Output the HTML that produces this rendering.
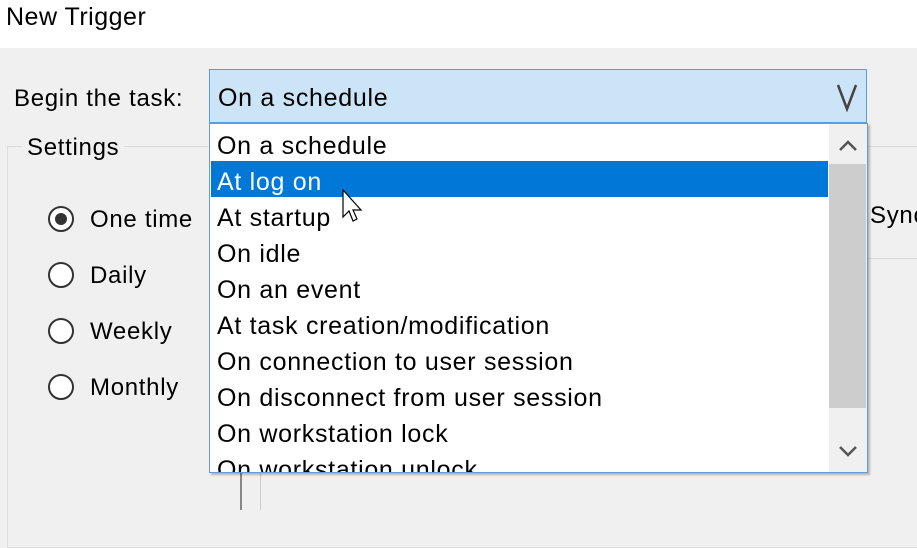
<!DOCTYPE html>
<html><head><style>
body{margin:0;width:917px;height:509px;overflow:hidden;background:#f0f0f0;font-family:"Liberation Sans",sans-serif;position:relative;color:#000}
.a{position:absolute;white-space:nowrap}
.t{font-size:24px;letter-spacing:0.7px}
.rad{position:absolute;width:26px;height:26px;border:2px solid #333;border-radius:50%;background:#fff;box-sizing:border-box}
.item{position:absolute;left:7px;font-size:25px;letter-spacing:0.7px;height:36px;line-height:36px}
</style></head><body>
<div class="a" style="left:0;top:0;width:917px;height:48px;background:#fff"></div>
<div class="a" style="left:6px;top:3px;font-size:25px;letter-spacing:0.5px">New Trigger</div>
<div class="a t" style="left:14px;top:85px">Begin the task:</div>
<div class="a" style="left:7px;top:146px;width:920px;height:400px;border:1px solid #dcdcdc"></div>
<div class="a t" style="left:22px;top:134px;background:#f0f0f0;padding:0 5px">Settings</div>
<div class="a" style="left:868px;top:258px;width:60px;height:1px;background:#dcdcdc"></div>
<div class="a" style="left:240px;top:470px;width:2px;height:40px;background:#888"></div>
<div class="a" style="left:260px;top:470px;width:1px;height:40px;background:#ccc"></div>
<div class="a t" style="left:870px;top:202px">Sync</div>
<div class="rad" style="left:48px;top:206px"><div style="position:absolute;left:5px;top:5px;width:12px;height:12px;border-radius:50%;background:#333"></div></div>
<div class="a t" style="left:90px;top:206px">One time</div>
<div class="rad" style="left:48px;top:262px"></div>
<div class="a t" style="left:90px;top:262px">Daily</div>
<div class="rad" style="left:48px;top:318px"></div>
<div class="a t" style="left:90px;top:318px">Weekly</div>
<div class="rad" style="left:48px;top:374px"></div>
<div class="a t" style="left:90px;top:374px">Monthly</div>
<div class="a" style="left:209px;top:69px;width:658px;height:54px;box-sizing:border-box;border:1px solid #569de5;background:#cce4f7"></div>
<div class="a" style="left:218px;top:84px;font-size:25px;letter-spacing:0.7px">On a schedule</div>
<svg class="a" style="left:836px;top:82px" width="24" height="30"><path d="M2 3 L11 27 L20 3" fill="none" stroke="#444" stroke-width="2.5"/></svg>
<div class="a" style="left:209px;top:123px;width:659px;height:350px;box-sizing:border-box;border:1px solid #6a9bd0;background:#fff;overflow:hidden;box-shadow:2px 2px 2px rgba(0,0,0,.25)">
<div class="a" style="left:1px;top:37px;width:617px;height:36px;background:#0078d7"></div>
<div class="item" style="top:4px">On a schedule</div>
<div class="item" style="top:40px;color:#fff">At log on</div>
<div class="item" style="top:76px">At startup</div>
<div class="item" style="top:112px">On idle</div>
<div class="item" style="top:148px">On an event</div>
<div class="item" style="top:184px">At task creation/modification</div>
<div class="item" style="top:220px">On connection to user session</div>
<div class="item" style="top:256px">On disconnect from user session</div>
<div class="item" style="top:292px">On workstation lock</div>
<div class="item" style="top:328px">On workstation unlock</div>
<div class="a" style="left:619px;top:0;width:38px;height:348px;background:#f0f0f0"></div>
<div class="a" style="left:619px;top:40px;width:37px;height:244px;background:#cdcdcd"></div>
<svg class="a" style="left:627px;top:15px" width="22" height="14"><path d="M3 11 L11 3 L19 11" fill="none" stroke="#555" stroke-width="2.5"/></svg>
<svg class="a" style="left:627px;top:320px" width="22" height="14"><path d="M3 3 L11 11 L19 3" fill="none" stroke="#555" stroke-width="2.5"/></svg>
</div>
<svg class="a" style="left:342px;top:189px" width="26" height="40"><path d="M1 1 L1 28 L7 22 L11 32 L15 30 L11 21 L19 21 Z" fill="#fff" stroke="#000" stroke-width="1.2"/></svg>
</body></html>
